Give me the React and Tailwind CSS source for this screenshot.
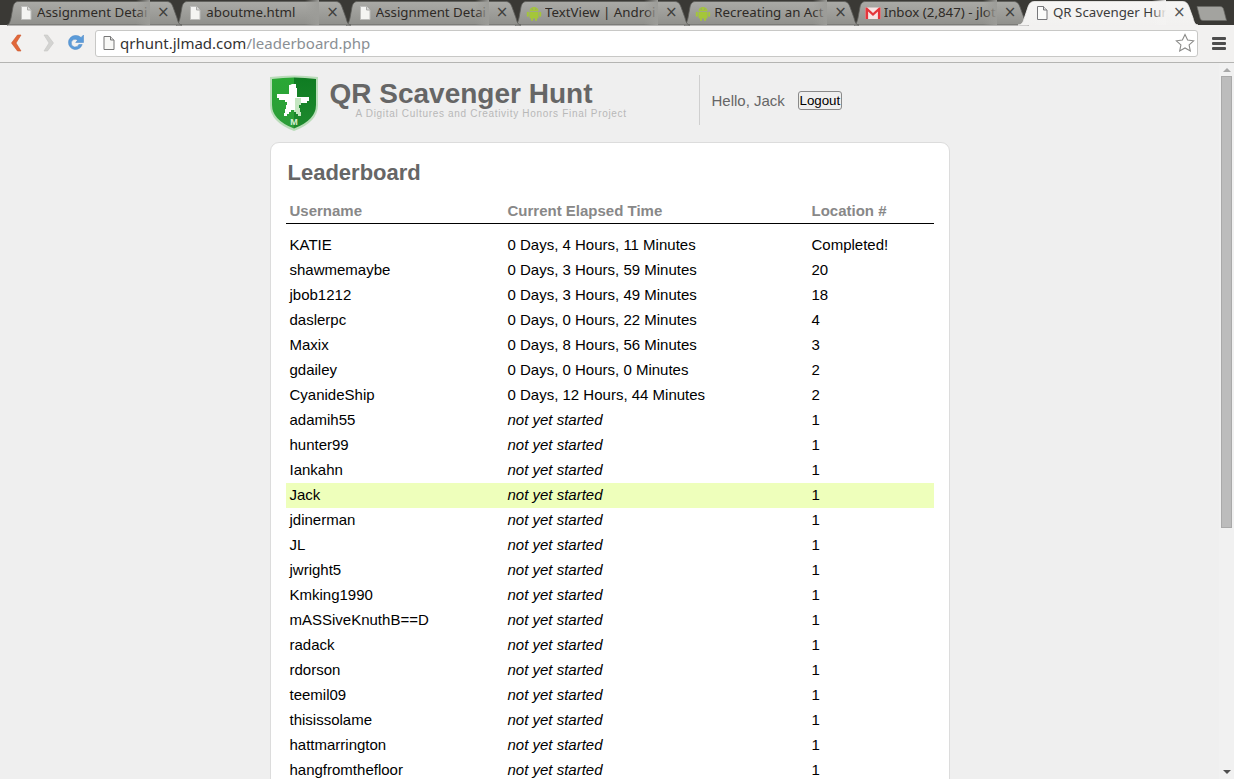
import React from "react";

const tabs = [
  { t: "Assignment Detai", i: "doc" },
  { t: "aboutme.html", i: "doc" },
  { t: "Assignment Detai", i: "doc" },
  { t: "TextView | Androi", i: "android" },
  { t: "Recreating an Act", i: "android" },
  { t: "Inbox (2,847) - jlot", i: "gmail" },
  { t: "QR Scavenger Hur", i: "doc", active: true },
];

const rows = [
  ["KATIE", "0 Days, 4 Hours, 11 Minutes", "Completed!"],
  ["shawmemaybe", "0 Days, 3 Hours, 59 Minutes", "20"],
  ["jbob1212", "0 Days, 3 Hours, 49 Minutes", "18"],
  ["daslerpc", "0 Days, 0 Hours, 22 Minutes", "4"],
  ["Maxix", "0 Days, 8 Hours, 56 Minutes", "3"],
  ["gdailey", "0 Days, 0 Hours, 0 Minutes", "2"],
  ["CyanideShip", "0 Days, 12 Hours, 44 Minutes", "2"],
  ["adamih55", null, "1"],
  ["hunter99", null, "1"],
  ["Iankahn", null, "1"],
  ["Jack", null, "1"],
  ["jdinerman", null, "1"],
  ["JL", null, "1"],
  ["jwright5", null, "1"],
  ["Kmking1990", null, "1"],
  ["mASSiveKnuthB==D", null, "1"],
  ["radack", null, "1"],
  ["rdorson", null, "1"],
  ["teemil09", null, "1"],
  ["thisissolame", null, "1"],
  ["hattmarrington", null, "1"],
  ["hangfromthefloor", null, "1"],
];

function DocIcon({ active }) {
  return (
    <svg width="16" height="16" viewBox="0 0 16 16" className="shrink-0">
      <path
        d="M3.500 1.500h6l3.500 3.500v9.500h-9.500z"
        fill={active ? "#fbfbfa" : "#f4f4f2"}
        stroke={active ? "#77777a" : "#bdbdbb"}
        strokeWidth="1"
      />
      <path d="M9.500 1.500v3.500h3.500" fill="#dcdcda" stroke={active ? "#77777a" : "#a9a9a7"} strokeWidth="1" />
    </svg>
  );
}

function AndroidIcon() {
  return (
    <svg width="16" height="16" viewBox="0 0 16 16" className="shrink-0">
      <g fill="#a4c639">
        <path d="M3.500 6.200a4.500 4.200 0 0 1 9 0z" />
        <path d="M3.500 7h9v5.500a1 1 0 0 1-1 1h-7a1 1 0 0 1-1-1z" />
        <rect x="0.800" y="6.800" width="2" height="5" rx="1" />
        <rect x="13.200" y="6.800" width="2" height="5" rx="1" />
        <rect x="5" y="13" width="2" height="3" rx="1" />
        <rect x="9" y="13" width="2" height="3" rx="1" />
      </g>
      <rect x="5.700" y="3.600" width="1" height="1" fill="#8e8e8a" />
      <rect x="9.300" y="3.600" width="1" height="1" fill="#8e8e8a" />
    </svg>
  );
}

function GmailIcon() {
  return (
    <svg width="16" height="16" viewBox="0 0 16 16" className="shrink-0">
      <rect x="0.500" y="2.500" width="15" height="11.500" fill="#f6e4e4" />
      <path d="M0.500 14V2.500H2L8 8l6-5.500h1.500V14h-2.600V6.500L8 11 3.100 6.500V14z" fill="#e5353b" />
    </svg>
  );
}

function Tab({ t, i, active, index }) {
  return (
    <div className="relative w-[169.33px] h-[25px] shrink-0" style={{ zIndex: active ? 20 : 10 - index }}>
      <svg width="174" height="25" viewBox="0 0 174 25" className="absolute left-0 top-0 overflow-visible">
        <defs>
          <linearGradient id={`tabg${index}`} x1="0" y1="0" x2="0" y2="1">
            <stop offset="0" stopColor={active ? "#f6f5f4" : "#aaaaa6"} />
            <stop offset="1" stopColor={active ? "#f2f1f0" : "#90908c"} />
          </linearGradient>
        </defs>
        <path
          d={
            active
              ? "M-6 25C-3 25-1 23 0 19L4 7C5.500 3 7 1.500 11 1.500H158C162 1.500 163.500 3 165 7L169 18C170 22 171 25 174 25Z"
              : "M-1 25C1 25 2 22 3 18L5 7C6 3 7.500 1.500 11 1.500H158C162 1.500 163.500 3 165 7L169 18C170 22 171 25 174 25Z"
          }
          fill={`url(#tabg${index})`}
          stroke={active ? "#f2f1f0" : "#5e5e5a"}
          strokeWidth="0.8"
        />
      </svg>
      <div className="relative flex items-center h-[25px] pl-[10px]">
        {i === "doc" && <DocIcon active={active} />}
        {i === "android" && <AndroidIcon />}
        {i === "gmail" && <GmailIcon />}
        <div
          className={`relative ml-[3px] w-[113px] h-[25px] overflow-hidden whitespace-nowrap text-[13.3px] leading-[25px] font-['Noto_Sans',sans-serif] ${
            active ? "text-[#3c3c3c]" : "text-[#2e2a26]"
          }`}
        >
          {t}
          <div
            className={`absolute right-0 top-0 h-full w-[14px] bg-gradient-to-r from-transparent ${
              active ? "to-[#f4f3f2]" : "to-[#9c9c98]"
            }`}
          />
        </div>
        <span className={`ml-[7px] text-[15px] leading-none w-[12px] text-center font-['DejaVu_Sans',sans-serif] ${active ? "text-[#555]" : "text-[#3f3f3d]"}`}>
          ×
        </span>
      </div>
    </div>
  );
}

function Logo() {
  return (
    <svg width="48" height="56" viewBox="0 0 48 56" className="shrink-0">
      <defs>
        <linearGradient id="shieldL" x1="0" y1="0" x2="0" y2="1">
          <stop offset="0" stopColor="#2aa835" />
          <stop offset="1" stopColor="#2c9c38" />
        </linearGradient>
        <linearGradient id="shieldR" x1="0" y1="0" x2="0" y2="1">
          <stop offset="0" stopColor="#0f7c22" />
          <stop offset="1" stopColor="#1e8a2e" />
        </linearGradient>
      </defs>
      <path d="M0 2Q24-1 48 2V30Q48 47 24 56Q0 47 0 30Z" fill="#b9dcb9" />
      <path d="M2 4Q13 2.500 24 2.500V53.500Q2 45 2 30Z" fill="url(#shieldL)" />
      <path d="M46 4Q35 2.500 24 2.500V53.500Q46 45 46 30Z" fill="url(#shieldR)" />
      <path
        d="M22 9h4v4h1v9h12v4h-2v2h-6v2h-2v3h1v4h1v4h-3v-2h-2v-2h-2v-2h-3v2h-2v2h-2v2h-3v-3h1v-4h1v-4h1v-3h-2v-2h-6v-2h-2v-4h12v-9h1z"
        fill="#ffffff"
      />
      <path d="M25 23h6v7h-2v3h1v4h1v4h-3v-2h-2v-2h-2v-2h1z" fill="#c5e6c2" />
      <text x="24" y="50" textAnchor="middle" fontSize="9" fontWeight="700" fill="#d8f0d5" fontFamily="Liberation Sans, sans-serif">
        M
      </text>
    </svg>
  );
}

export default function App() {
  return (
    <div className="h-screen w-full overflow-hidden flex flex-col bg-[#efefef] font-['Liberation_Sans',Arial,sans-serif]">
      {/* Tab strip */}
      <div className="h-[25px] shrink-0 bg-[#3a3935] flex pl-[8px]">
        {tabs.map((tab, n) => (
          <Tab key={n} index={n} {...tab} />
        ))}
        <svg width="31" height="15" viewBox="0 0 31 15" className="mt-[6px] ml-[3px] shrink-0">
          <path d="M1 0.500H24C26 0.500 27 1.500 27.500 3L30.500 14.500H7C5 14.500 4.500 13.500 4 12Z" fill="#a3a39f" stroke="#6a6a66" strokeWidth="0.7" />
        </svg>
      </div>

      {/* Toolbar */}
      <div className="h-[38px] shrink-0 bg-[#f2f1f0] border-b border-[#b4b4b2] flex items-center pb-[1px]">
        <svg width="12" height="18" viewBox="0 0 12 18" className="ml-[10px] shrink-0">
          <path d="M7.500 1L1.500 9l6 8h3.500L6 9l5-8z" fill="#e2683a" stroke="#c9542a" strokeWidth="0.6" />
        </svg>
        <svg width="12" height="18" viewBox="0 0 12 18" className="ml-[21px] shrink-0">
          <path d="M4.500 1l6 8-6 8H1L6 9 1 1z" fill="#d3d3d1" stroke="#c6c6c4" strokeWidth="0.6" />
        </svg>
        <svg width="18" height="18" viewBox="0 0 18 18" className="ml-[12px] shrink-0">
          <path d="M8 1.500a7 7 0 1 0 7.200 9h-3.400a3.900 3.900 0 1 1-3.800-5.300c1 0 1.800.3 2.500 1L8.700 8.500H16.500V1l-2.500 2.500A7 7 0 0 0 8 1.500z" fill="#5b9bd9" stroke="#4a86c4" strokeWidth="0.5" />
        </svg>
        <div className="ml-[10px] w-[1103px] h-[27px] bg-white border border-[#c8c8c6] rounded-[3px] flex items-center pl-[6px] shrink-0">
          <svg width="14" height="16" viewBox="0 0 14 16" className="shrink-0">
            <path d="M2 1.500h6.500L12 5v9.500H2z" fill="#f8f8f6" stroke="#777" strokeWidth="1" />
            <path d="M8.500 1.500V5H12" fill="#ddd" stroke="#777" strokeWidth="1" />
          </svg>
          <span className="ml-[4px] text-[15px] leading-none font-['Noto_Sans',sans-serif] text-[#333]">
            qrhunt.jlmad.com<span className="text-[#8a8f94]">/leaderboard.php</span>
          </span>
          <svg width="20" height="20" viewBox="0 0 20 20" className="ml-auto mr-[2px] shrink-0">
            <path d="M10 1.500l2.600 5.600 6 .7-4.500 4.100 1.200 6L10 15l-5.300 2.900 1.200-6L1.400 7.800l6-.7z" fill="#fff" stroke="#8a8a88" strokeWidth="1.100" />
          </svg>
        </div>
        <div className="ml-[14px] w-[14px] flex flex-col gap-[2px] shrink-0">
          <div className="h-[3px] bg-[#4d4d4d] rounded-[1px]" />
          <div className="h-[3px] bg-[#4d4d4d] rounded-[1px]" />
          <div className="h-[3px] bg-[#4d4d4d] rounded-[1px]" />
        </div>
      </div>

      {/* Viewport */}
      <div className="flex-1 min-h-0 flex overflow-hidden">
        <div className="flex-1 min-w-0 overflow-hidden flex justify-center">
          <div className="w-[680px] shrink-0">
            <div className="h-[79px] flex items-start">
              <div className="mt-[12px]">
                <Logo />
              </div>
              <div className="ml-[12px] w-[369px]">
                <div className="mt-[14px] text-[28px] leading-[34px] font-bold text-[#666] whitespace-nowrap">QR Scavenger Hunt</div>
                <div className="mt-[-4px] ml-[26px] text-[10px] leading-[13px] text-[#b8b8b8] tracking-[0.69px] whitespace-nowrap">
                  A Digital Cultures and Creativity Honors Final Project
                </div>
              </div>
              <div className="mt-[12px] w-px h-[50px] bg-[#cfcfcf]" />
              <div className="ml-[12px] mt-[28px] flex items-center">
                <span className="text-[15px] leading-[19px] text-[#666]">Hello, Jack</span>
                <button className="ml-[13px] h-[19px] w-[44px] bg-[#efefef] border border-[#8a8a8a] rounded-[3px] text-[13.33px] leading-[15px] text-black text-center p-0">
                  Logout
                </button>
              </div>
            </div>
            <div className="bg-white border border-[#dcdcdc] rounded-[9px] pl-[15px] pt-[16px] pb-[20px] w-[680px]">
              <h1 className="pl-[2px] text-[22px] leading-[28px] font-bold text-[#666]">Leaderboard</h1>
              <table className="mt-[12px] w-[648px] table-fixed border-collapse text-[15px] text-black">
                <colgroup>
                  <col className="w-[218px]" />
                  <col className="w-[304px]" />
                  <col className="w-[126px]" />
                </colgroup>
                <thead>
                  <tr className="h-[24px] border-b border-black text-[#888] text-left">
                    <th className="pl-[4px] py-0 font-bold">Username</th>
                    <th className="pl-[4px] py-0 font-bold">Current Elapsed Time</th>
                    <th className="pl-[4px] py-0 font-bold">Location #</th>
                  </tr>
                </thead>
                <tbody>
                  <tr className="h-[10px]">
                    <td colSpan={3} className="p-0" />
                  </tr>
                  {rows.map((r) => (
                    <tr key={r[0]} className={`h-[25px] ${r[0] === "Jack" ? "bg-[#eeffbb]" : ""}`}>
                      <td className="pl-[4px] py-0">{r[0]}</td>
                      <td className="pl-[4px] py-0">{r[1] ?? <em>not yet started</em>}</td>
                      <td className="pl-[4px] py-0">{r[2]}</td>
                    </tr>
                  ))}
                </tbody>
              </table>
            </div>
          </div>
        </div>

        {/* Scrollbar */}
        <div className="w-[15px] shrink-0 bg-[#f1f1f1] flex flex-col items-center">
          <div className="mt-[5px] w-0 h-0 border-l-[4px] border-r-[4px] border-b-[4px] border-l-transparent border-r-transparent border-b-[#a8a8a8]" />
          <div className="mt-[4px] ml-[-1px] w-[11px] h-[452px] bg-[#bcbcbc] border border-[#a9a9a9]" />
          <div className="mt-auto mb-[5px] w-0 h-0 border-l-[4px] border-r-[4px] border-t-[4px] border-l-transparent border-r-transparent border-t-[#505050]" />
        </div>
      </div>
    </div>
  );
}
